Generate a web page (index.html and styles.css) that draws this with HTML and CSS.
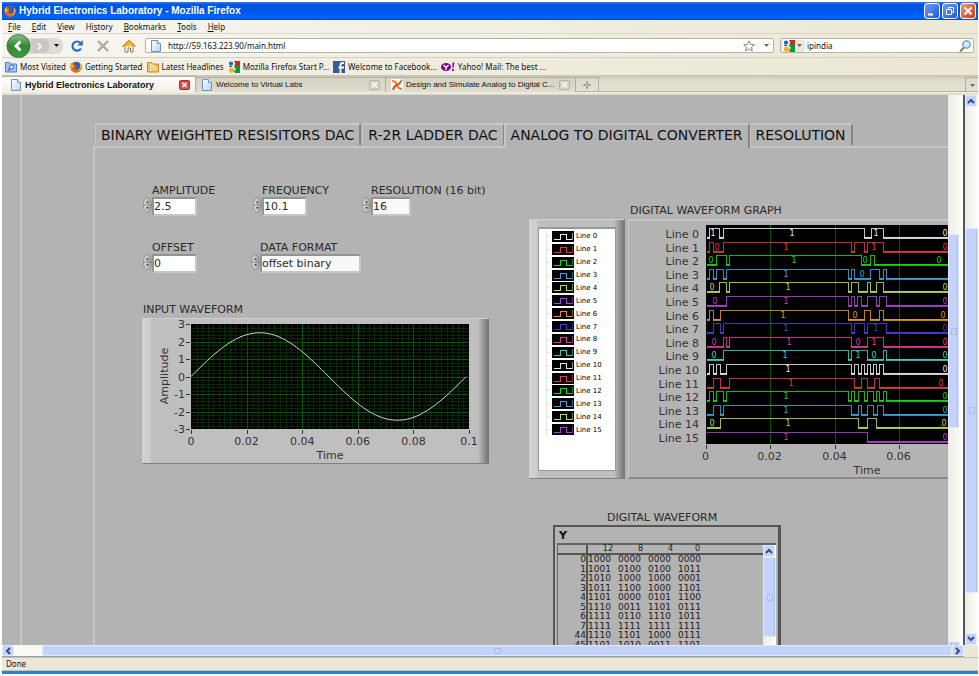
FILE: index.html
```html
<!DOCTYPE html>
<html lang="en">
<head>
<meta charset="utf-8">
<title>Hybrid Electronics Laboratory</title>
<link rel="stylesheet" href="styles.css">
</head>
<body>
<svg class="defs" aria-hidden="true">
  <defs>
    <linearGradient id="g-green" x1="0" y1="0" x2="0" y2="1"><stop offset="0" stop-color="#8cc08a"/><stop offset=".5" stop-color="#2f8a35"/><stop offset="1" stop-color="#3f9d3f"/></linearGradient>
    <linearGradient id="g-page" x1="0" y1="0" x2="1" y2="1"><stop offset="0" stop-color="#fff"/><stop offset="1" stop-color="#b4d3f5"/></linearGradient>
    <linearGradient id="g-spin" x1="0" y1="0" x2="1" y2="0"><stop offset="0" stop-color="#e4e4e4"/><stop offset="1" stop-color="#9a9a9a"/></linearGradient>
    <symbol id="fox" viewBox="0 0 12 12"><circle cx="6" cy="6" r="5.6" fill="#e8771a"/><circle cx="6.6" cy="4.8" r="3.9" fill="#2f62b5"/><path d="M1 2.2 3 3.2 5.4 2.8 4.6 4.6 6 5.8 5 7 3.6 6.6 5.2 8.6 8.4 8.4 10 6 11.4 3.6 11.8 7 9.6 10.8 5.6 11.8 1.6 9.6 .3 6Z" fill="#e56a12"/><path d="M1 3.2 3.4 4.4 3 6.4 1.4 7.6Z" fill="#fbc14a"/><path d="M10.6 3.4Q11.6 7.6 8.6 10" fill="none" stroke="#fbc14a"/></symbol>
    <symbol id="page" viewBox="0 0 12 12"><path d="M1.5.5h6l3 3v8h-9z" fill="url(#g-page)" stroke="#6f94c4"/><path d="M7.5.5v3h3" fill="#fff" stroke="#6f94c4"/></symbol>
    <symbol id="goog" viewBox="0 0 12 12"><path d="M0 0h12v12H0z" fill="#fff"/><path d="M7 3h5v9H7l-1-2 2-2-2-2z" fill="#15933f"/><path d="M6 0h6v4.500H8Z" fill="#dd2222"/><circle cx="3" cy="2.600" r="2.200" fill="#2a62c9"/><circle cx="3.600" cy="9.200" r="2.700" fill="#f5b321"/><path d="M1 5.500h3" stroke="#2a62c9"/></symbol>
    <symbol id="down" viewBox="0 0 5 3"><path d="M0 0h5L2.5 3z" fill="currentColor"/></symbol>
    <symbol id="chev" viewBox="0 0 8 6"><path d="M1 1l3 3 3-3" fill="none" stroke="#35507f" stroke-width="2"/></symbol>
    <symbol id="spin" viewBox="0 0 9 16"><ellipse cx="4.5" cy="8" rx="4" ry="7.500" fill="url(#g-spin)" stroke="#888" stroke-width=".8"/><path d="M.5 8h8" stroke="#888"/><path d="M3 6h3L4.500 3.800zM3 10h3l-1.500 2.200z" fill="#555"/></symbol>
    <symbol id="xdim" viewBox="0 0 11 10"><rect x=".5" y=".5" width="10" height="9" rx="1.5" fill="#d6d3c8" stroke="#b5b2a6"/><path d="M3 2.5l5 5M8 2.5l-5 5" stroke="#f6f5f0" stroke-width="1.6"/></symbol>
  </defs>
</svg>

<header class="titlebar">
  <svg class="ico12"><use href="#fox"/></svg>
  <h1>Hybrid Electronics Laboratory - Mozilla Firefox</h1>
  <div class="winbtns">
    <button aria-label="Minimize"><svg viewBox="0 0 14 14"><path d="M3 10.5h5" stroke="#fff" stroke-width="2"/></svg></button>
    <button aria-label="Restore"><svg viewBox="0 0 14 14"><path d="M5.5 5V3.5h5v5H9M3.5 5.500h5v5h-5z" fill="none" stroke="#fff"/></svg></button>
    <button class="close" aria-label="Close"><svg viewBox="0 0 14 14"><path d="M3.500 3.500l7 7M10.500 3.500l-7 7" stroke="#fff" stroke-width="2"/></svg></button>
  </div>
</header>

<nav class="menubar" aria-label="Menu">
  <button><u>F</u>ile</button><button><u>E</u>dit</button><button><u>V</u>iew</button><button>Hi<u>s</u>tory</button><button><u>B</u>ookmarks</button><button><u>T</u>ools</button><button><u>H</u>elp</button>
</nav>

<div class="navbar">
  <div class="backfwd">
    <button class="back" aria-label="Back"><svg viewBox="0 0 25 24"><circle cx="12.500" cy="12" r="11.500" fill="url(#g-green)" stroke="#4c6f4a"/><path d="M14.500 7.500 10 12l4.500 4.500" fill="none" stroke="#fff" stroke-width="3"/></svg></button>
    <button class="fwd" aria-label="Forward"><svg viewBox="0 0 18 14"><path d="M7 4.500 10 7.500 7 10.500" fill="none" stroke="#f4f4f4" stroke-width="2"/></svg></button>
    <button class="hist" aria-label="History list"><svg class="caret"><use href="#down"/></svg></button>
  </div>
  <button class="tool" aria-label="Reload"><svg viewBox="0 0 14 14"><path d="M11 9.500A4.600 4.600 0 1 1 10.500 4" fill="none" stroke="#2a6fd0" stroke-width="2.200"/><path d="M12.800 1v5.500H7.300z" fill="#2a6fd0"/></svg></button>
  <button class="tool" aria-label="Stop"><svg viewBox="0 0 14 14"><path d="M2 2l10 10M12 2 2 12" stroke="#aaa" stroke-width="2.400"/></svg></button>
  <button class="tool" aria-label="Home"><svg viewBox="0 0 14 14"><path d="M3 7v6h3V9h2.500v4H11V7" fill="#fff" stroke="#8a7a50"/><path d="M.5 7.500 7 1.500l6.500 6" fill="#f7b733" stroke="#c98a17" stroke-width="1.200"/></svg></button>
  <div class="field url">
    <svg class="ico12"><use href="#page"/></svg>
    <input type="text" aria-label="Address" value="http://59.163.223.90/main.html">
    <button class="mini" aria-label="Bookmark this page"><svg viewBox="0 0 12 12"><path d="M6 .8 7.500 4.300l3.800.4-2.800 2.500.8 3.700L6 9l-3.300 1.900.8-3.700L.7 4.700l3.800-.4z" fill="#fff" stroke="#888"/></svg></button>
    <button class="drop" aria-label="Address list"><svg class="caret"><use href="#down"/></svg></button>
  </div>
  <div class="field search">
    <button class="engine" aria-label="Search engine"><svg class="ico12"><use href="#goog"/></svg><svg class="caret"><use href="#down"/></svg></button>
    <input type="text" aria-label="Search" value="ipindia">
    <button class="mini" aria-label="Go"><svg viewBox="0 0 12 12"><path d="M5 7.500 1 11.500" stroke="#a0714a" stroke-width="2"/><circle cx="7.500" cy="4.500" r="3.700" fill="#d8ecff" stroke="#5f94cf" stroke-width="1.300"/></svg></button>
  </div>
</div>

<nav class="bookmarks" aria-label="Bookmarks">
  <a href="#"><svg class="ico12" viewBox="0 0 12 12"><path d="M.5 1.500h4l1 1.500h6v8H.5z" fill="#9cc0f2" stroke="#4f80c8"/><circle cx="6.500" cy="6" r="2" fill="#dcebff" stroke="#3767b5"/><path d="M5 7.500 3 9.500" stroke="#3767b5" stroke-width="1.200"/></svg>Most Visited</a>
  <a href="#"><svg class="ico12"><use href="#fox"/></svg>Getting Started</a>
  <a href="#"><svg class="ico12" viewBox="0 0 12 12"><path d="M.5 1.500h4l1 1.500h6v8H.5z" fill="#f7bd5a" stroke="#d18a1c"/><path d="M3 5.500a4 4 0 0 1 4 4M3 3.500a6 6 0 0 1 6 6" fill="none" stroke="#fff"/><circle cx="3.800" cy="8.800" r="1" fill="#fff"/></svg>Latest Headlines</a>
  <a href="#"><svg class="ico12"><use href="#goog"/></svg>Mozilla Firefox Start P...</a>
  <a href="#"><svg class="ico12" viewBox="0 0 12 12"><path d="M0 0h12v12H0z" fill="#3b5998"/><path d="M11 2H9.500Q7.500 2 7.500 4v8M5.500 6.500H11" fill="none" stroke="#fff" stroke-width="1.800"/></svg>Welcome to Facebook...</a>
  <a href="#"><svg class="ico14" viewBox="0 0 14 12"><ellipse cx="5" cy="6" rx="5" ry="4" fill="#7b0099"/><path d="M2.500 4 5 6.500 7.500 4M5 6.500V9" fill="none" stroke="#fff" stroke-width="1.400"/><path d="M11.500 1.500h2L12.500 7h-1zM11 8h1.800v2H11z" fill="#7b0099"/></svg>Yahoo! Mail: The best ...</a>
</nav>

<div class="tabstrip">
  <div class="btab active"><button class="label"><svg class="ico12"><use href="#page"/></svg>Hybrid Electronics Laboratory</button><button class="x" aria-label="Close tab"><svg viewBox="0 0 11 10"><rect x=".5" y=".5" width="10" height="9" rx="1.500" fill="#d9534b" stroke="#9e2f2a"/><path d="M3.500 3l4 4M7.500 3l-4 4" stroke="#fff" stroke-width="1.600"/></svg></button></div>
  <div class="btab"><button class="label"><svg class="ico12"><use href="#page"/></svg>Welcome to Virtual Labs</button><button class="x" aria-label="Close tab"><svg><use href="#xdim"/></svg></button></div>
  <div class="btab"><button class="label"><svg class="ico12" viewBox="0 0 12 12"><path d="M0 0h12v12H0z" fill="#fff"/><path d="M1 2q4 0 5 4t5 4" fill="none" stroke="#f07f22" stroke-width="2.200"/><path d="M2 11q1-4 4-5t4-4" fill="none" stroke="#e2502a" stroke-width="2.200"/><circle cx="10.500" cy="1.500" r="1" fill="#3aa0d8"/></svg>Design and Simulate Analog to Digital C...</button><button class="x" aria-label="Close tab"><svg><use href="#xdim"/></svg></button></div>
  <button class="newtab" aria-label="New tab"><svg viewBox="0 0 8 8"><path d="M4 .5v7M.5 4h7" stroke="#888" stroke-width="2"/><path d="M4 1.500v5M1.500 4h5" stroke="#eee" stroke-width=".6"/></svg></button>
  <button class="alltabs" aria-label="List all tabs"><svg class="caret"><use href="#down"/></svg></button>
</div>

<main class="view">
  <div class="applet">
    <section class="lab">
      <div class="ltabs">
        <button>BINARY WEIGHTED RESISITORS DAC</button>
        <button>R-2R LADDER DAC</button>
        <button class="on">ANALOG TO DIGITAL CONVERTER</button>
        <button>RESOLUTION</button>
      </div>
      <div class="page">
        <div class="left">
          <form class="controls">
            <div class="ctl"><label for="amp">AMPLITUDE</label><div class="num"><svg class="spin"><use href="#spin"/></svg><input id="amp" type="text" value="2.5"></div></div>
            <div class="ctl"><label for="freq">FREQUENCY</label><div class="num"><svg class="spin"><use href="#spin"/></svg><input id="freq" type="text" value="10.1"></div></div>
            <div class="ctl"><label for="res">RESOLUTION (16 bit)</label><div class="num narrow"><svg class="spin"><use href="#spin"/></svg><input id="res" type="text" value="16"></div></div>
            <div class="ctl"><label for="off">OFFSET</label><div class="num"><svg class="spin"><use href="#spin"/></svg><input id="off" type="text" value="0"></div></div>
            <div class="ctl wide"><label for="fmt">DATA FORMAT</label><div class="num"><svg class="spin"><use href="#spin"/></svg><select id="fmt"><option>offset binary</option></select></div></div>
          </form>
          <h2>INPUT WAVEFORM</h2>
          <div class="bezel inwave"><svg id="sine" width="335" height="143" viewBox="0 0 335 143" role="img" aria-label="Input waveform"></svg></div>
        </div>
        <div class="right">
          <div class="digital">
            <div class="bezel legend"><ul id="legend"></ul></div>
            <div class="dgraph">
              <h2>DIGITAL WAVEFORM GRAPH</h2>
              <div class="dpanel"><svg id="digital" width="380" height="256" viewBox="0 0 380 256" role="img" aria-label="Digital waveform graph"></svg></div>
            </div>
          </div>
          <div class="dtable">
            <h2>DIGITAL WAVEFORM</h2>
            <div class="tbox">
              <h3>Y</h3>
              <div class="tscroll">
                <table>
                  <colgroup><col class="idx"><col class="word"><col class="word"><col class="word"><col></colgroup>
                  <thead><tr><th></th><th>12</th><th>8</th><th>4</th><th>0</th></tr></thead>
                  <tbody>
                    <tr><th>0</th><td>1000</td><td>0000</td><td>0000</td><td>0000</td></tr>
                    <tr><th>1</th><td>1001</td><td>0100</td><td>0100</td><td>1011</td></tr>
                    <tr><th>2</th><td>1010</td><td>1000</td><td>1000</td><td>0001</td></tr>
                    <tr><th>3</th><td>1011</td><td>1100</td><td>1000</td><td>1101</td></tr>
                    <tr><th>4</th><td>1101</td><td>0000</td><td>0101</td><td>1100</td></tr>
                    <tr><th>5</th><td>1110</td><td>0011</td><td>1101</td><td>0111</td></tr>
                    <tr><th>6</th><td>1111</td><td>0110</td><td>1110</td><td>1011</td></tr>
                    <tr><th>7</th><td>1111</td><td>1111</td><td>1111</td><td>1111</td></tr>
                    <tr><th>44</th><td>1110</td><td>1101</td><td>1000</td><td>0111</td></tr>
                    <tr><th>45</th><td>1101</td><td>1010</td><td>0011</td><td>1101</td></tr>
                  </tbody>
                </table>
                <div class="vbar tbar"><span class="arrow up"><svg><use href="#chev"/></svg></span><span class="thumb"></span></div>
              </div>
            </div>
          </div>
        </div>
      </div>
    </section>
  </div>
  <div class="vbar inner"><span class="gap"></span><span class="thumb"></span><span class="rest"></span><span class="arrow"><svg><use href="#chev"/></svg></span></div>
  <div class="vbar outer"><span class="arrow up"><svg><use href="#chev"/></svg></span><span class="gap"></span><span class="thumb"></span><span class="rest"></span><span class="arrow"><svg><use href="#chev"/></svg></span></div>
</main>

<div class="hrow"><div class="hbar"><span class="arrow lt"><svg><use href="#chev"/></svg></span><span class="gap"></span><span class="thumb"></span><span class="arrow rt"><svg><use href="#chev"/></svg></span></div></div>
<footer class="status">Done</footer>
<div class="edge"></div>
<script src="charts.js"></script>
</body>
</html>
```
FILE: styles.css
```css
* { box-sizing: border-box; }
html, body { height: 100%; }
body {
  margin: 0; padding: 2px 1px 2px 2px; background: #fff; overflow: hidden;
  display: flex; flex-direction: column;
  font: 8px/12px "Noto Sans", sans-serif; color: #111;
}
button, input, select { font: inherit; color: inherit; border: 0; background: none; padding: 0; margin: 0; outline: 0; }
h1, h2, h3, ul { margin: 0; padding: 0; font-weight: 400; }
svg { display: block; flex: none; }
.defs { position: absolute; width: 0; height: 0; }
.ico12 { width: 12px; height: 12px; }
.ico14 { width: 14px; height: 12px; }
.caret { width: 5px; height: 3px; color: #666; }

.titlebar {
  flex: none; height: 18px; display: flex; align-items: center; gap: 3px; padding: 0 2px;
  background: linear-gradient(#2f7df0, #0054e3 15%, #0058ee 60%, #0068ff 85%, #0047c4);
}
.titlebar h1 { flex: 1; font: 700 10px/18px "Liberation Sans", sans-serif; color: #fff; white-space: nowrap; }
.winbtns { display: flex; gap: 2px; }
.winbtns button { width: 16px; height: 16px; border: 1px solid #fff; border-radius: 3px; background: linear-gradient(135deg, #6f9cf8, #2458d8); }
.winbtns .close { background: linear-gradient(135deg, #f0977c, #d43a14); }

.menubar { flex: none; height: 14px; display: flex; gap: 11px; padding: 0 6px; background: linear-gradient(90deg, #f6f5f0, #ece8d6); border-bottom: 1px solid #dad7c8; }
.menubar button { line-height: 12px; }

.navbar { flex: none; height: 24px; display: flex; align-items: center; padding: 0 4px; gap: 12px; background: linear-gradient(90deg, #f6f5f0, #ece8d6); border-bottom: 1px solid #d3d0c0; }
.backfwd { display: flex; align-items: center; width: 57px; margin-right: -5px; background: linear-gradient(90deg, transparent 30%, #dddbd4 30%); border-radius: 7px; height: 16px; }
.back { width: 25px; height: 24px; margin: -4px 0; }
.fwd { width: 18px; height: 14px; background: #c9c8c4; border-radius: 0 5px 5px 0; }
.hist { flex: 1; display: grid; place-items: center; height: 14px; }
.hist .caret { color: #111; }
.tool { width: 14px; height: 14px; }
.field { display: flex; align-items: center; height: 15px; background: #fff; border: 1px solid #b5b2a4; border-radius: 2px; }
.field input { flex: 1; min-width: 0; height: 12px; line-height: 12px; }
.url { flex: 1; margin-left: -3px; margin-right: -6px; gap: 4px; padding-left: 4px; }
.url input { padding-left: 2px; }
.mini { width: 12px; height: 12px; }
.drop { width: 14px; height: 12px; display: grid; place-items: center; }
.search { width: 194px; padding-right: 2px; }
.engine { display: flex; align-items: center; gap: 2px; padding: 0 3px 0 2px; background: #ece9dc; margin-right: 2px; }

.bookmarks { flex: none; height: 17px; display: flex; align-items: center; gap: 4px; padding: 1px 3px 0; background: linear-gradient(90deg, #f4f2e8, #ebe7d3); }
.bookmarks a { display: flex; align-items: center; gap: 3px; color: inherit; text-decoration: none; white-space: nowrap; }

.tabstrip { flex: none; height: 20px; display: flex; align-items: flex-end; padding: 2px 0 3px; background: linear-gradient(#c4c1b1, #dedbcb 25%, #e4e1d2 80%, #aeab9b 82%, #f3f1e6 86%, #d8d5c4); }
.btab { display: flex; align-items: center; width: 190px; height: 15px; padding: 0 5px; border: 1px solid #b3b0a0; border-bottom: 0; border-left: 0; background: linear-gradient(#d6d3c4, #dfdccd); font: 8px/12px "Liberation Sans", sans-serif; }
.btab.active { width: 194px; height: 16px; background: linear-gradient(#fff, #f1efe4); font-weight: 700; font-size: 9px; padding-left: 8px; }
.label { flex: 1; display: flex; align-items: center; gap: 3px; white-space: nowrap; min-width: 0; }
.x svg { width: 11px; height: 10px; }
.newtab { width: 23px; height: 15px; display: grid; place-items: center; border: 1px solid #b3b0a0; border-width: 1px 1px 0 0; }
.newtab svg { width: 8px; height: 8px; }
.alltabs { margin-left: auto; width: 13px; height: 15px; display: grid; place-items: center; border: 1px solid #b3b0a0; border-width: 1px 0 0 1px; }

.view { flex: 1; min-height: 0; display: flex; }
.applet { flex: 1; min-width: 0; overflow: hidden; padding-left: 18px; background: #b3b3b3; font: 11px/14px "DejaVu Sans", sans-serif; color: #2a2a2a; }
.lab { height: 100%; border-left: 2px solid #c6c6c6; padding: 28px 0 0 71px; display: flex; flex-direction: column; overflow: hidden; }
.ltabs { display: flex; align-items: flex-end; height: 23px; padding-left: 2px; flex: none; position: relative; }
.ltabs button { height: 22px; margin: 0 1px 1px 0; padding: 0 5px; font-size: 14px; line-height: 20px; color: #111; white-space: nowrap; border: 2px solid #c6c6c6; border-right-color: #868686; border-bottom: 0; border-left-width: 1px; background: #b5b5b5; }
.ltabs .on { height: 25px; margin: 0 0 -2px -2px; background: #b3b3b3; border-left-width: 2px; padding: 0 5px 3px; }
.page { flex: 1; min-height: 0; border: 2px solid #c6c6c6; border-width: 2px 0 0 2px; display: grid; grid-template-columns: 434px 1fr; align-items: start; }
h2 { font-size: 11px; line-height: 14px; white-space: nowrap; }
.left { padding: 36px 0 0 48px; }
.controls { display: grid; grid-template-columns: 110px 109px 130px; row-gap: 25px; }
.ctl label { display: block; padding-left: 9px; height: 15px; white-space: nowrap; }
.ctl.wide { margin-left: -2px; }
.num { display: flex; align-items: flex-start; margin-top: -2px; }
.num input, .num select { width: 45px; height: 19px; line-height: 14px; border: 2px solid #939393; border-right-color: #c6c6c6; border-bottom-color: #c6c6c6; background: #fff; appearance: none; border-radius: 0; }
.num.narrow input { width: 40px; background: #fafafa; }
.num .spin { width: 9px; height: 16px; }
.wide select { width: 101px; background: #f8f8f8; }
.left h2 { margin: 30px 0 1px; }

.bezel {
  border: 1px solid; border-color: #d0d0d0 #777 #808080 #d0d0d0;
  background: linear-gradient(90deg, #d2d2d2, #cecece 6px, #bfbfbf 9px, #bfbfbf calc(100% - 10px), #777);
}
.inwave { width: 347px; height: 146px; margin-left: -1px; overflow: hidden; }
.digital { display: flex; align-items: flex-end; gap: 3px; padding-top: 56px; }
.legend { flex: none; width: 96px; height: 260px; padding: 7px 8px; }
.legend ul { height: 100%; list-style: none; background: #fff; border: 1px solid #999; border-width: 2px 1px 1px 1px; padding: 1px 0 34px 7px; display: grid; grid-auto-rows: 1fr; }
.legend li { display: flex; align-items: center; gap: 2px; min-height: 0; font-size: 7px; line-height: 12px; color: #000; border-left: 1px solid #e4e4e4; }
.legend li::before { content: ""; width: 3px; border-top: 1px solid #e4e4e4; }
.legend li svg { width: 22px; height: 11px; }
.dgraph { flex: 1; min-width: 0; }
.dgraph h2 { padding-left: 2px; margin-bottom: 1px; }
.dpanel { height: 260px; border: 1px solid #c8c8c8; border-width: 2px 0 0 1px; border-bottom: 2px solid #8a8a8a; overflow: hidden; }
.dtable { margin: 32px 0 0 24px; width: 228px; }
.dtable h2 { padding-left: 54px; }
.tbox { border: 2px solid #555; border-right-width: 3px; padding: 1px 2px 0; height: 200px; }
.tbox h3 { font: 700 11px/15px "DejaVu Sans", sans-serif; padding-left: 2px; color: #111; }
.tscroll { display: flex; justify-content: space-between; border: 1px solid #666; border-width: 2px 0 0 1px; }
.tscroll table { flex: 1; table-layout: fixed; width: 100%; border-collapse: separate; border-spacing: 0; font: 9px/9px "DejaVu Sans", sans-serif; color: #1c1c1c; align-self: flex-start; }
.idx { width: 30px; }
.word { width: 30px; }
.tscroll th, .tscroll td { padding: 0; font-weight: 400; text-align: left; height: 9px; }
.tscroll tbody tr:nth-child(even) > * { height: 10px; }
.tscroll tr > th:first-child { text-align: right; border-right: 2px solid #555; padding-right: 0; }
.tscroll thead th { font-size: 8px; height: 10px; line-height: 8px; text-align: right; padding-right: 5px; border-bottom: 2px solid #555; }
.tscroll thead th:last-child { padding-right: 63px; }

.vbar { flex: none; display: flex; flex-direction: column; background: linear-gradient(90deg, #eeede5, #fefefb); }
.vbar .thumb, .hbar .thumb { background: #c3d3fd; border: 1px solid #dfe8ff; }
.vbar .thumb { display: grid; place-items: center; box-shadow: inset -1px 0 #a9bff0; }
.vbar .thumb::after { content: ""; width: 4px; height: 5px; border: 1px solid #a9bdf2; }
.arrow { flex: none; display: grid; place-items: center; width: 12px; height: 12px; background: #c3d3fd; border: 1px solid #e3ebff; border-radius: 2px; }
.arrow svg { width: 8px; height: 6px; }
.up svg { transform: rotate(180deg); }
.lt svg { transform: rotate(90deg); }
.rt svg { transform: rotate(-90deg); }
.rest { flex: 1; }
.tbar { width: 13px; }
.tbar .thumb { height: 80px; margin-bottom: 100px; }
.inner { width: 17px; padding-right: 4px; border-right: 2px solid #555; overflow: hidden; }
.inner .gap { flex: 140; }
.inner .thumb { flex: 192; }
.inner .rest { flex: 214; }
.inner .arrow { margin-bottom: -8px; }
.outer { width: 13px; }
.outer .gap { flex: 121; }
.outer .thumb { flex: 365; }
.outer .rest { flex: 40; }

.hrow { flex: none; background: #ebe8d8; padding-right: 14px; }
.hbar { display: flex; height: 12px; background: #fbfaf5; border-bottom: 1px solid #9aa0b0; }
.hbar .gap { width: 28px; }
.hbar .thumb { flex: 1; border-radius: 2px; display: grid; place-items: center; }
.hbar .thumb::after { content: ""; width: 5px; height: 4px; border: 1px solid #a9bdf2; }
.hbar .arrow { height: 11px; }
.status { flex: none; height: 14px; padding-left: 4px; line-height: 12px; background: #ebe8d8; border-top: 1px solid #c4c1b2; border-bottom: 1px solid #c9c4a4; }
.edge { flex: none; height: 3px; background: #2b7de0; }

.tick { font: 11px "DejaVu Sans", sans-serif; fill: #333; }
.mid { text-anchor: middle; }
.end { text-anchor: end; }
.plot { fill: #000; }
.minor { stroke: #002c00; shape-rendering: crispEdges; }
.major { stroke: #005800; shape-rendering: crispEdges; }
.mark { stroke: #333; shape-rendering: crispEdges; }
.curve { fill: none; stroke: #d4d4d4; }
.wave { fill: none; shape-rendering: crispEdges; }
.high { opacity: .85; }
.low { fill: none; stroke-width: 2; shape-rendering: crispEdges; opacity: .85; }
.bit { font: 8px "DejaVu Sans", sans-serif; text-anchor: middle; }
```
FILE: charts.js
```js
const NS = "http://www.w3.org/2000/svg";
function add(parent, tag, attrs, text) {
  const el = document.createElementNS(NS, tag);
  for (const k in attrs) el.setAttribute(k, attrs[k]);
  if (text !== undefined) el.textContent = text;
  parent.appendChild(el);
  return el;
}

/* Input waveform: 2.5 V sine over 0 to 0.099 s */
const sine = document.getElementById("sine");
const L = 48, T = 5, W = 278, H = 105;
add(sine, "rect", { x: L, y: T, width: W, height: H, class: "plot" });
for (let i = 0; i <= 50; i++) {
  const x = Math.round(L + i * W / 50) + 0.5;
  if (i % 10) add(sine, "path", { d: `M${x} ${T}v${H}`, class: "minor" });
}
for (let i = 0; i <= 30; i++) {
  const y = Math.round(T + i * H / 30) + 0.5;
  if (i % 5) add(sine, "path", { d: `M${L} ${y}h${W}`, class: "minor" });
}
for (let i = 1; i < 5; i++) add(sine, "path", { d: `M${Math.round(L + i * W / 5) + 0.5} ${T}v${H}`, class: "major" });
for (let i = 1; i < 6; i++) add(sine, "path", { d: `M${L} ${Math.round(T + i * H / 6) + 0.5}h${W}`, class: "major" });
let d = "";
for (let i = 0; i <= 99; i++) {
  const x = L + i / 100 * W;
  const y = T + H / 2 - 2.5 * Math.sin(2 * Math.PI * i / 99) * H / 6;
  d += (i ? "L" : "M") + x.toFixed(1) + " " + y.toFixed(1);
}
add(sine, "path", { d, class: "curve" });
for (let v = -3; v <= 3; v++) {
  const y = T + H / 2 - v * H / 6;
  add(sine, "path", { d: `M${L - 5} ${Math.round(y) + 0.5}h4`, class: "mark" });
  add(sine, "text", { x: L - 6, y: y + 4, class: "tick end" }, v);
}
["0", "0.02", "0.04", "0.06", "0.08", "0.1"].forEach((t, i) => {
  const x = L + i * W / 5;
  add(sine, "path", { d: `M${Math.round(x) + 0.5} ${T + H + 1}v4`, class: "mark" });
  add(sine, "text", { x: x, y: 126, class: "tick mid" }, t);
});
add(sine, "text", { x: 187, y: 140, class: "tick mid" }, "Time");
add(sine, "text", { x: 0, y: 0, class: "tick mid", transform: "translate(25 57) rotate(-90)" }, "Amplitude");

/* Digital lines: first level, toggle positions, then [bit, x] labels */
const lines = [
  ["#e8e8e8", 0, [3, 13, 17, 158, 165, 177], [[1, 7], [1, 86], [1, 170], [0, 239]]],
  ["#e23b3b", 0, [3, 7, 17, 145, 148, 158, 161, 177], [[0, 11], [1, 80], [1, 168], [0, 239]]],
  ["#14d814", 0, [10, 20, 23, 155, 164, 168], [[0, 5], [1, 88], [0, 159], [0, 233]]],
  ["#3aa5dc", 0, [3, 7, 10, 17, 20, 142, 145, 148, 164, 173, 177, 180], [[1, 80], [0, 156]]],
  ["#b9dc4e", 0, [13, 20, 23, 142, 145, 152, 161, 164, 170, 177], [[0, 6], [1, 82], [0, 239]]],
  ["#a845d8", 0, [20, 142, 145, 148, 151, 155, 161, 170, 173, 180], [[0, 9], [1, 80], [0, 239]]],
  ["#e09a18", 0, [3, 7, 14, 142, 158, 164, 173, 177], [[1, 77], [0, 149], [0, 237]]],
  ["#4242d8", 0, [7, 14, 17, 145, 148, 158, 161, 180], [[1, 80], [1, 170], [0, 239]]],
  ["#e0359c", 0, [17, 20, 23, 145, 161, 177], [[0, 8], [1, 83], [0, 152], [1, 168], [0, 239]]],
  ["#3cd0c4", 0, [17, 142, 145, 161, 177, 180], [[0, 8], [1, 79], [1, 152], [0, 168], [0, 239]]],
  ["#e8e8e8", 0, [3, 7, 10, 14, 20, 145, 148, 152, 155, 158, 161, 164, 167, 170, 173, 177], [[1, 82], [0, 239]]],
  ["#e23b3b", 0, [7, 14, 23, 148, 155, 161, 168, 173], [[1, 85], [0, 235]]],
  ["#14d814", 0, [3, 7, 10, 17, 20, 142, 145, 148, 152, 158, 161, 167, 170, 173, 177, 180], [[1, 80], [0, 239]]],
  ["#3aa5dc", 0, [7, 14, 17, 145, 152, 155, 161, 167, 171, 177], [[1, 80], [0, 239]]],
  ["#b9dc4e", 0, [14, 152, 161, 170], [[0, 6], [1, 82], [0, 238]]],
  ["#a845d8", 1, [161], [[1, 80], [0, 239]]]
];
const dig = document.getElementById("digital");
const DL = 77, DT = 4;
add(dig, "rect", { x: DL, y: DT, width: 320, height: 219, class: "plot" });
["0", "0.02", "0.04", "0.06"].forEach((t, i) => {
  const x = Math.round(DL + i * 64.3) + 0.5;
  if (i) add(dig, "path", { d: `M${x} ${DT}v219`, class: "major" });
  add(dig, "path", { d: `M${x} ${DT + 220}v4`, class: "mark" });
  add(dig, "text", { x: x - 1, y: 239, class: "tick mid" }, t);
});
add(dig, "text", { x: 238, y: 253, class: "tick mid" }, "Time");

const legend = document.getElementById("legend");
lines.forEach(([color, first, toggles, bits], i) => {
  const top = DT + Math.round(3 + 13.6 * i) + 0.5;
  const end = 320;
  let level = first;
  let path = `M${DL + 1} ${top + (level ? 0 : 9)}`;
  let low = "";
  let from = 1;
  for (const t of toggles.concat(end)) {
    if (!level) low += `M${DL + from} ${top + 9.5}H${DL + t + 1}`;
    path += `H${DL + t + 0.5}`;
    level = 1 - level;
    if (t < end) path += `V${top + (level ? 0 : 9)}`;
    from = t;
  }
  add(dig, "path", { d: path, stroke: color, class: "wave high" });
  add(dig, "path", { d: low, stroke: color, class: "low" });
  for (const [b, x] of bits) add(dig, "text", { x: DL + x, y: top + 7.5, fill: color, class: "bit" }, b);
  add(dig, "text", { x: DL - 7, y: top + 9, class: "tick end" }, "Line " + i);

  const li = document.createElement("li");
  const key = add(li, "svg", { viewBox: "0 0 22 11" });
  add(key, "rect", { width: 22, height: 11, class: "plot" });
  add(key, "path", { d: "M2 8.5h6v-5h6v5h6", stroke: color, class: "wave" });
  add(key, "path", { d: "M20.500 2v7", stroke: color, class: "wave", "stroke-opacity": 0.6 });
  li.append("Line " + i);
  legend.append(li);
});
```
